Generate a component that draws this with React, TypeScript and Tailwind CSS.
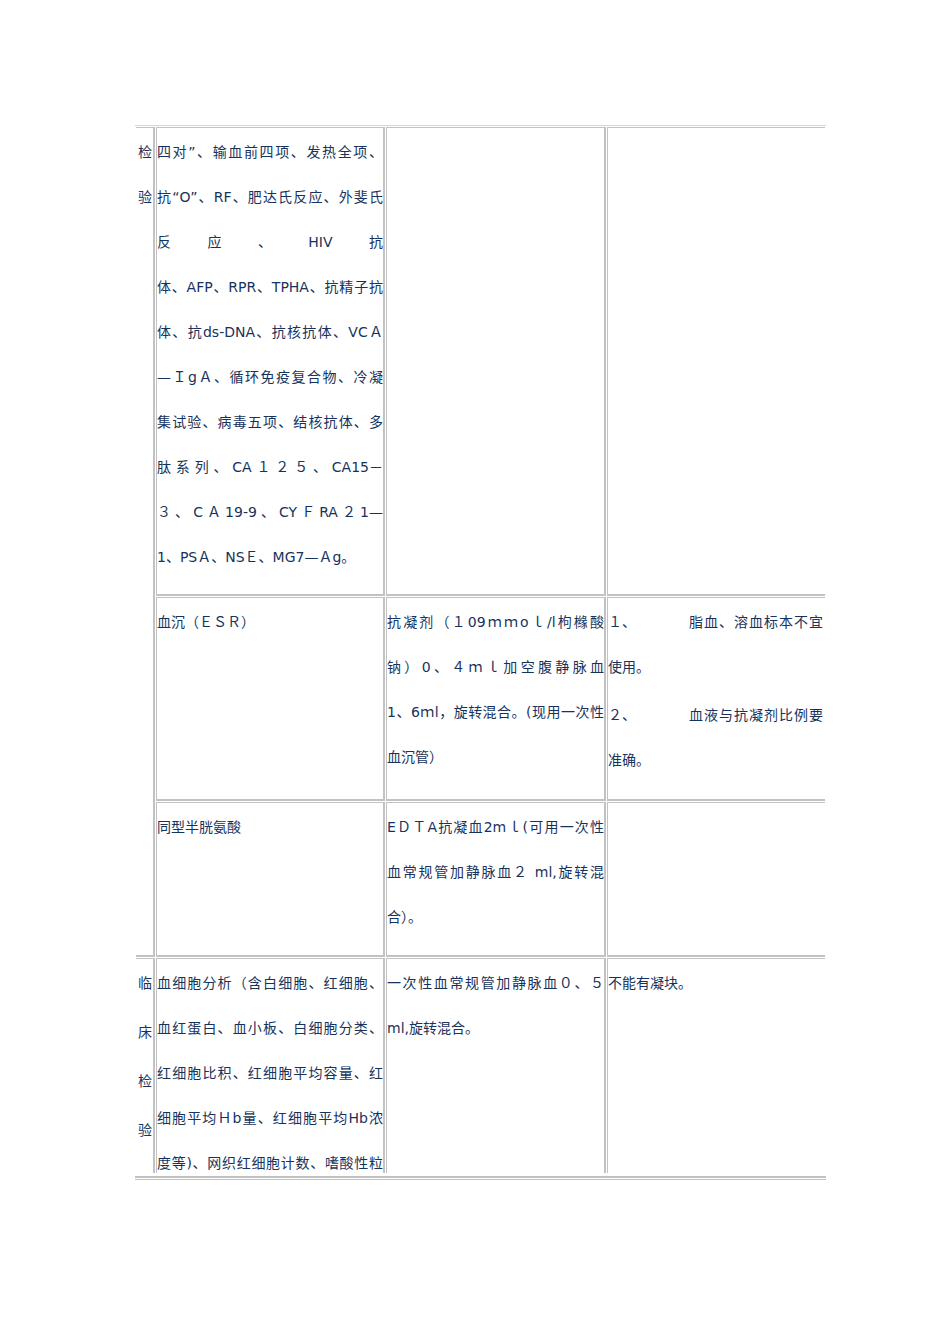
import React from "react";

// one visual line of a cell; "full" lines are stretched to the cell width
const Line = ({ children, full = false }: { children: React.ReactNode; full?: boolean }) => (
  <div
    className={
      full
        ? "whitespace-nowrap text-justify [text-align-last:justify]"
        : "whitespace-nowrap"
    }
  >
    {children}
  </div>
);

// cell borders: each side is on or off, so no two classes fight over one side
const cell = ({ l = true, r = true, b = true }: { l?: boolean; r?: boolean; b?: boolean } = {}) =>
  [
    "p-0 align-top border-t border-[#c2c2c2]",
    l ? "border-l" : "",
    r ? "border-r-2" : "",
    b ? "border-b-2" : "",
  ].join(" ");

export default function App() {
  const serumLines: { text: string; full: boolean }[] = [
    { text: "四对”、输血前四项、发热全项、", full: true },
    { text: "抗“O”、RF、肥达氏反应、外斐氏", full: true },
    { text: "反应、HIV抗", full: true },
    { text: "体、AFP、RPR、TPHA、抗精子抗", full: true },
    { text: "体、抗ds-DNA、抗核抗体、VCＡ", full: true },
    { text: "—ＩgＡ、循环免疫复合物、冷凝", full: true },
    { text: "集试验、病毒五项、结核抗体、多", full: true },
    { text: "肽系列、CA１２５、CA15－", full: true },
    { text: "３、CＡ19-9、CYＦRA２1—", full: true },
    { text: "1、PSＡ、NSＥ、MG7—Ａg。", full: false },
  ];

  const bloodLines = [
    "血细胞分析（含白细胞、红细胞、",
    "血红蛋白、血小板、白细胞分类、",
    "红细胞比积、红细胞平均容量、红",
    "细胞平均Ｈb量、红细胞平均Hb浓",
    "度等)、网织红细胞计数、嗜酸性粒",
  ];

  return (
    <div className="min-h-[1344px] w-[950px] bg-white pt-[125px] pl-[135px] font-['DejaVu_Sans','Noto_Sans_CJK_SC',sans-serif] text-[14px] leading-[45px] text-[#17335c]">
      <table className="w-[691px] table-fixed border-separate border-spacing-[1px] border-t border-[#d6d6d6]">
        <tbody>
          <tr className="h-[469px]">
            <td rowSpan={3} className={`${cell({ l: false })} w-[19px] pt-[2px]`}>
              <div className="pl-[2px]">
                <div>检</div>
                <div>验</div>
              </div>
            </td>
            <td className={`${cell()} w-[229px] pt-[2px]`}>
              {serumLines.map((l, i) => (
                <Line key={i} full={l.full}>
                  {l.text}
                </Line>
              ))}
            </td>
            <td className={`${cell()} w-[220px] pt-[2px]`}></td>
            <td className={`${cell({ r: false })} w-[218px] pt-[2px]`}></td>
          </tr>

          <tr className="h-[204px]">
            <td className={`${cell()} pt-[2px]`}>
              <Line>血沉（ＥＳＲ）</Line>
            </td>
            <td className={`${cell()} pt-[2px]`}>
              <Line full>抗凝剂（１09ｍｍoｌ/l枸橼酸</Line>
              <Line full>钠）0、４ｍｌ加空腹静脉血</Line>
              <Line full>1、6ｍl，旋转混合。(现用一次性</Line>
              <Line>血沉管）</Line>
            </td>
            <td className={`${cell({ r: false })} pt-[2px]`}>
              <div className="flex justify-between whitespace-nowrap pr-[1px]">
                <span>１、</span>
                <span className="tracking-[1px]">脂血、溶血标本不宜</span>
              </div>
              <Line>使用。</Line>
              <div className="mt-[3px] flex justify-between whitespace-nowrap pr-[1px]">
                <span>２、</span>
                <span className="tracking-[1px]">血液与抗凝剂比例要</span>
              </div>
              <Line>准确。</Line>
            </td>
          </tr>

          <tr className="h-[155px]">
            <td className={`${cell()} pt-[2px]`}>
              <Line>同型半胱氨酸</Line>
            </td>
            <td className={`${cell()} pt-[2px]`}>
              <Line full>EＤＴA抗凝血2mｌ(可用一次性</Line>
              <Line full>血常规管加静脉血２ ml,旋转混</Line>
              <Line>合）。</Line>
            </td>
            <td className={`${cell({ r: false })} pt-[2px]`}></td>
          </tr>

          <tr className="h-[215px]">
            <td className={cell({ l: false, b: false })}>
              <div className="h-[214px] overflow-hidden pl-[2px] leading-[49px]">
                <div>临</div>
                <div>床</div>
                <div>检</div>
                <div>验</div>
              </div>
            </td>
            <td className={cell({ b: false })}>
              <div className="h-[214px] overflow-hidden pt-[2px]">
                {bloodLines.map((t, i) => (
                  <Line key={i} full>
                    {t}
                  </Line>
                ))}
              </div>
            </td>
            <td className={cell({ b: false })}>
              <div className="h-[214px] overflow-hidden pt-[2px]">
                <Line full>一次性血常规管加静脉血０、５</Line>
                <Line>ml,旋转混合。</Line>
              </div>
            </td>
            <td className={cell({ r: false, b: false })}>
              <div className="h-[214px] overflow-hidden pt-[2px]">
                <Line>不能有凝块。</Line>
              </div>
            </td>
          </tr>
        </tbody>
      </table>
      <div className="mt-[2px] h-[4px] w-[691px] border-t-2 border-b border-[#c2c2c2]"></div>
    </div>
  );
}
